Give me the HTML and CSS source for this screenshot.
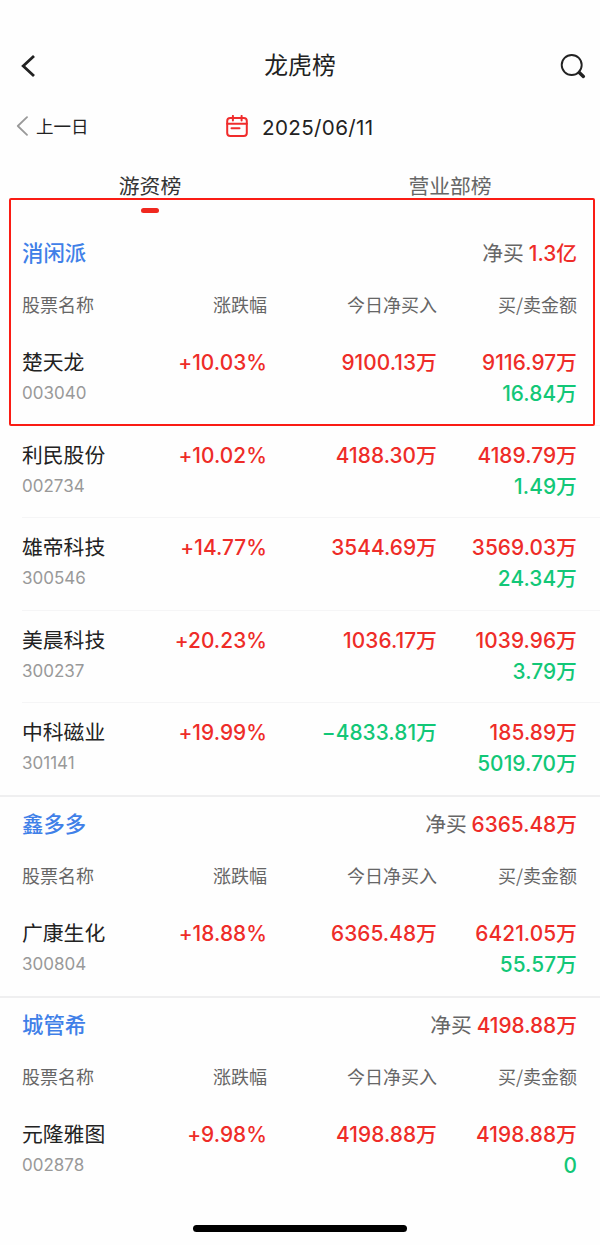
FILE: index.html
```html
<!DOCTYPE html>
<html lang="zh-CN">
<head>
    <meta charset="UTF-8">
    <meta name="viewport" content="width=device-width, initial-scale=1.0">
    <title>龙虎榜</title>
    <link rel="stylesheet" href="styles.css">
</head>
<body>
    <div class="app">
        <header class="navbar">
            <svg class="icon-back" width="16" height="24" viewBox="0 0 16 24"><path d="M14 2 3.2 12 14 22"/></svg>
            <h1>龙虎榜</h1>
            <svg class="icon-search" width="26" height="26" viewBox="0 0 26 26"><circle cx="11.7" cy="12" r="10"/><path d="M19.2 19.4l4.2 4"/></svg>
        </header>

        <div class="datebar">
            <div class="prev-day">
                <svg width="12" height="20" viewBox="0 0 12 20"><path d="M11 1.2 1.8 10l9.2 8.8"/></svg>
                <span>上一日</span>
            </div>
            <div class="date">
                <svg width="22" height="22" viewBox="0 0 22 22"><rect x="1.2" y="3" width="19.6" height="18" rx="3"/><path d="M1.2 8.8h19.6M6.9 .9v4.6M15.6 .9v4.6M5.5 13.2h8"/></svg>
                <span>2025/06/11</span>
            </div>
        </div>

        <nav class="tabs">
            <div class="tab active">游资榜</div>
            <div class="tab">营业部榜</div>
        </nav>

        <section class="group">
            <div class="group-title"><h2>消闲派</h2><p>净买 <b>1.3亿</b></p></div>
            <div class="cols"><span>股票名称</span><span>涨跌幅</span><span>今日净买入</span><span>买/卖金额</span></div>
            <div class="row">
                <div class="stock">楚天龙<small>003040</small></div>
                <div class="num up">+10.03%</div>
                <div class="num up">9100.13万</div>
                <div class="num up">9116.97万<span class="down">16.84万</span></div>
            </div>
            <div class="row">
                <div class="stock">利民股份<small>002734</small></div>
                <div class="num up">+10.02%</div>
                <div class="num up">4188.30万</div>
                <div class="num up">4189.79万<span class="down">1.49万</span></div>
            </div>
            <div class="row">
                <div class="stock">雄帝科技<small>300546</small></div>
                <div class="num up">+14.77%</div>
                <div class="num up">3544.69万</div>
                <div class="num up">3569.03万<span class="down">24.34万</span></div>
            </div>
            <div class="row">
                <div class="stock">美晨科技<small>300237</small></div>
                <div class="num up">+20.23%</div>
                <div class="num up">1036.17万</div>
                <div class="num up">1039.96万<span class="down">3.79万</span></div>
            </div>
            <div class="row">
                <div class="stock">中科磁业<small>301141</small></div>
                <div class="num up">+19.99%</div>
                <div class="num down">−4833.81万</div>
                <div class="num up">185.89万<span class="down">5019.70万</span></div>
            </div>
        </section>

        <section class="group">
            <div class="group-title"><h2>鑫多多</h2><p>净买 <b>6365.48万</b></p></div>
            <div class="cols"><span>股票名称</span><span>涨跌幅</span><span>今日净买入</span><span>买/卖金额</span></div>
            <div class="row">
                <div class="stock">广康生化<small>300804</small></div>
                <div class="num up">+18.88%</div>
                <div class="num up">6365.48万</div>
                <div class="num up">6421.05万<span class="down">55.57万</span></div>
            </div>
        </section>

        <section class="group">
            <div class="group-title"><h2>城管希</h2><p>净买 <b>4198.88万</b></p></div>
            <div class="cols"><span>股票名称</span><span>涨跌幅</span><span>今日净买入</span><span>买/卖金额</span></div>
            <div class="row">
                <div class="stock">元隆雅图<small>002878</small></div>
                <div class="num up">+9.98%</div>
                <div class="num up">4198.88万</div>
                <div class="num up">4198.88万<span class="down">0</span></div>
            </div>
        </section>

        <div class="home-bar"></div>
        <div class="highlight"></div>
    </div>
</body>
</html>
```
FILE: styles.css
```css
* {
    box-sizing: border-box;
}

body {
    margin: 0;
    background: #fefefe;
    color: #222;
    font-family: Inter, "Noto Sans CJK SC", sans-serif;
}

h1, h2, p {
    margin: 0;
    font-weight: 400;
}

svg {
    display: block;
    fill: none;
    stroke-linecap: round;
    stroke-linejoin: round;
}

.app {
    position: relative;
    width: 600px;
    height: 1245px;
    padding-top: 40px;
    overflow: hidden;
}

/* Top bar */
.navbar {
    display: flex;
    align-items: center;
    justify-content: space-between;
    height: 52px;
    padding: 0 14px 0 20px;
}

.navbar h1 {
    font-size: 23.8px;
    line-height: 50px;
    padding-bottom: 1px;
    margin-left: 4px;
}

.icon-back {
    stroke: #222;
    stroke-width: 2.8;
    stroke-linecap: butt;
    stroke-linejoin: miter;
}

.icon-search {
    stroke: #222;
    stroke-width: 1.9;
}

.icon-search path {
    stroke-width: 3.4;
}

/* Date switcher */
.datebar {
    display: grid;
    grid-template-columns: 210px 1fr;
    align-items: center;
    height: 68px;
    padding-left: 16px;
}

.prev-day {
    display: flex;
    align-items: center;
    gap: 8px;
    font-size: 17.5px;
}

.prev-day span {
    padding-bottom: 2px;
}

.prev-day svg {
    stroke: #999;
    stroke-width: 1.8;
}

.date {
    display: flex;
    align-items: center;
    gap: 14px;
    font-size: 20.6px;
    letter-spacing: 0.35px;
    line-height: 28px;
}

.date span {
    padding-top: 4px;
}

.date svg {
    stroke: #f02c2c;
    stroke-width: 2;
}

/* Tabs */
.tabs {
    display: grid;
    grid-template-columns: 1fr 1fr;
    height: 65.5px;
    padding-top: 12px;
}

.tab {
    font-size: 20.8px;
    line-height: 30px;
    text-align: center;
    color: #666;
}

.tab.active {
    color: #333;
}

.tab.active::after {
    content: "";
    display: block;
    width: 18px;
    height: 5px;
    margin: 6px auto 0;
    border-radius: 3px;
    background: #f0281f;
}

/* Trader groups */
.group + .group {
    border-top: 2px solid #efeff0;
}

.group-title {
    display: flex;
    align-items: center;
    justify-content: space-between;
    height: 52px;
    padding: 0 23px 0 22px;
}

.group-title h2 {
    font-size: 21.4px;
    font-weight: 500;
    color: #4080e8;
}

.group-title p {
    font-size: 20.8px;
    color: #666;
}

.group-title b {
    margin-left: -1px;
    font-weight: 500;
    color: #ee2c28;
}

.cols, .row {
    display: grid;
    grid-template-columns: 110px 135px 170px 140px;
}

.cols {
    height: 54.5px;
    padding-left: 22px;
    font-family: "Noto Sans CJK SC", sans-serif;
    font-size: 18px;
    line-height: 53px;
    color: #666;
}

.cols span + span, .num {
    text-align: right;
}

.row {
    height: 92.5px;
    margin-left: 22px;
    padding-top: 14px;
    font-size: 20.8px;
    line-height: 31px;
}

/* the first row has no divider, so it gets the pixel as padding */
.cols + .row {
    padding-top: 15px;
}

.row + .row {
    border-top: 1px solid #f5f5f6;
}

.stock small {
    display: block;
    font-size: 17px;
    color: #999;
}

.num {
    font-weight: 500;
    letter-spacing: 0.08px;
}

.num span {
    display: block;
}

.up {
    color: #ee2c28;
}

.down {
    color: #12c777;
}

.home-bar {
    position: absolute;
    left: 193px;
    bottom: 13px;
    width: 214px;
    height: 7px;
    border-radius: 4px;
    background: #000;
}

/* Marked area over the first stock */
.highlight {
    position: absolute;
    top: 198px;
    left: 9px;
    width: 586px;
    height: 228px;
    border: 2px solid #fa1c14;
    border-radius: 2px;
}
```
